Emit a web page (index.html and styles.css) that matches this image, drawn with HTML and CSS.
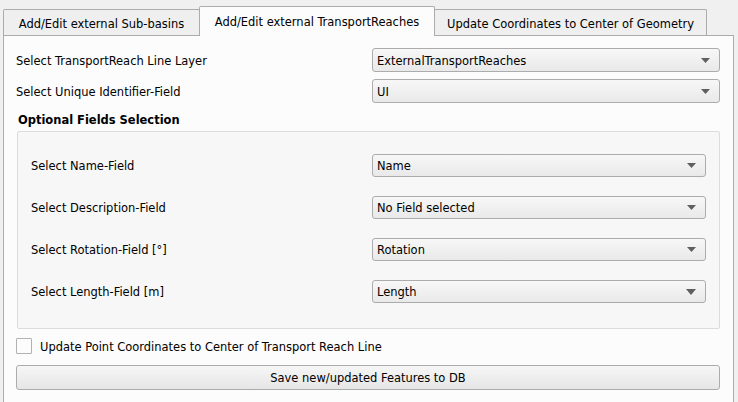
FILE: index.html
```html
<!DOCTYPE html>
<html>
<head>
<meta charset="utf-8">
<link rel="stylesheet" href="styles.css">
</head>
<body>
<div class="tabs">
  <div class="tab tab-1">Add/Edit external Sub-basins</div>
  <div class="tab tab-2 active">Add/Edit external TransportReaches</div>
  <div class="tab tab-3">Update Coordinates to Center of Geometry</div>
</div>
<div class="pane">
  <div class="row">
    <span class="label">Select TransportReach Line Layer</span>
    <div class="combo combo-outer"><span>ExternalTransportReaches</span><svg class="arrow" width="9" height="5" viewBox="0 0 9 5"><path d="M0 0H9L4.5 5Z"/></svg></div>
  </div>
  <div class="row">
    <span class="label">Select Unique Identifier-Field</span>
    <div class="combo combo-outer"><span>UI</span><svg class="arrow" width="9" height="5" viewBox="0 0 9 5"><path d="M0 0H9L4.5 5Z"/></svg></div>
  </div>
  <div class="heading">Optional Fields Selection</div>
  <div class="group">
    <div class="row row-inner">
      <span class="label">Select Name-Field</span>
      <div class="combo combo-inner"><span>Name</span><svg class="arrow" width="9" height="5" viewBox="0 0 9 5"><path d="M0 0H9L4.5 5Z"/></svg></div>
    </div>
    <div class="row row-inner">
      <span class="label">Select Description-Field</span>
      <div class="combo combo-inner"><span>No Field selected</span><svg class="arrow" width="9" height="5" viewBox="0 0 9 5"><path d="M0 0H9L4.5 5Z"/></svg></div>
    </div>
    <div class="row row-inner">
      <span class="label">Select Rotation-Field [°]</span>
      <div class="combo combo-inner"><span>Rotation</span><svg class="arrow" width="9" height="5" viewBox="0 0 9 5"><path d="M0 0H9L4.5 5Z"/></svg></div>
    </div>
    <div class="row row-inner">
      <span class="label">Select Length-Field [m]</span>
      <div class="combo combo-inner"><span>Length</span><svg class="arrow" width="10" height="6" viewBox="0 0 10 6"><path d="M0 0H10L5 6Z"/></svg></div>
    </div>
  </div>
  <div class="check-row">
    <span class="checkbox"></span>
    <span class="check-label">Update Point Coordinates to Center of Transport Reach Line</span>
  </div>
  <div class="button">Save new/updated Features to DB</div>
</div>
</body>
</html>
```
FILE: styles.css
```css
html, body {
  margin: 0;
  padding: 0;
  background: #f0f0f0;
  font-family: "DejaVu Sans Condensed", "DejaVu Sans", sans-serif;
  font-size: 12.75px;
  color: #000;
  overflow: hidden;
}

.tabs {
  display: flex;
  align-items: flex-end;
  padding: 6px 0 0 3px;
  height: 35px;
  box-sizing: border-box;
  position: relative;
  z-index: 2;
}

.tab {
  box-sizing: border-box;
  height: 26px;
  border: 1px solid #acacac;
  border-bottom: none;
  border-radius: 2px 2px 0 0;
  background: #efefef;
  display: flex;
  align-items: center;
  justify-content: center;
  padding-top: 1px;
  white-space: nowrap;
}

.tab-1 { width: 197px; }
.tab-2 { width: 236px; margin-left: -1px; }
.tab-3 { width: 273px; margin-left: -1px; }

.tab.active {
  height: 30px;
  margin-bottom: -1px;
  background: #fcfcfc;
  padding-top: 0;
  padding-bottom: 1px;
  position: relative;
  z-index: 3;
}

.pane {
  margin-left: 3px;
  width: 731px;
  box-sizing: border-box;
  height: 367px;
  border: 1px solid #acacac;
  border-bottom: none;
  background: #fcfcfc;
  padding: 12px 13px 0 12px;
  display: flex;
  flex-direction: column;
}

.row {
  display: flex;
  align-items: center;
  justify-content: space-between;
  height: 24px;
}

.row + .row { margin-top: 7px; }

.label { white-space: nowrap; }

.combo {
  box-sizing: border-box;
  height: 24px;
  border: 1px solid #acacac;
  border-radius: 3px;
  background: linear-gradient(#f7f7f7, #e9e9e9);
  display: flex;
  align-items: center;
  justify-content: space-between;
  padding: 0 9px 0 4px;
}

.combo-outer { width: 348px; }
.combo-inner { width: 334px; height: 23px; }

.arrow { fill: #5f5f5f; display: block; }

.heading {
  font-weight: bold;
  margin: 9px 0 0 2px;
  height: 16px;
  line-height: 16px;
}

.group {
  margin: 3px 0 0 1px;
  border: 1px solid #dcdcdc;
  border-radius: 2px;
  background: #f7f7f7;
  padding: 22px 13px 25px 13px;
}

.row-inner { height: 23px; }
.row + .row-inner { margin-top: 19px; }

.check-row {
  display: flex;
  align-items: center;
  margin-top: 9px;
  height: 16px;
}

.checkbox {
  box-sizing: border-box;
  width: 16px;
  height: 16px;
  border: 1px solid #b2b2b2;
  background: #fcfcfc;
  border-radius: 1px;
  margin-right: 8px;
}

.button {
  box-sizing: border-box;
  margin-top: 11px;
  height: 25px;
  border: 1px solid #acacac;
  border-radius: 3px;
  background: linear-gradient(#f6f6f6, #e6e6e6);
  display: flex;
  align-items: center;
  justify-content: center;
}
```
